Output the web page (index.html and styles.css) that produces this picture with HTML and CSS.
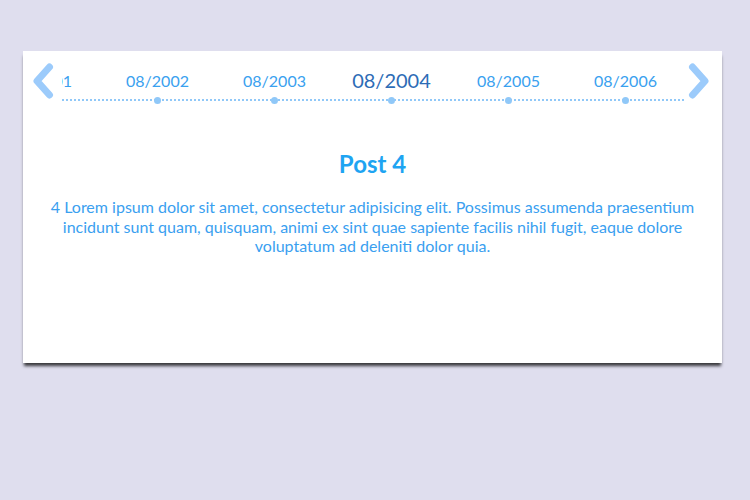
FILE: index.html
```html
<!DOCTYPE html>
<html>
<head>
<meta charset="utf-8">
<link rel="stylesheet" href="styles.css">
</head>
<body>
<div class="page">
  <div class="card">
    <div class="nav">
      <div class="arrow arrow-left">
        <svg width="24" height="36" viewBox="0 0 24 36"><path d="M17.5 4 L5 18 L17.5 32" fill="none" stroke="#9ccbfb" stroke-width="7" stroke-linecap="round" stroke-linejoin="round"/></svg>
      </div>
      <div class="track">
        <div class="events">
          <div class="event"><span class="label">08/2001</span><span class="dot"></span></div>
          <div class="event"><span class="label">08/2002</span><span class="dot"></span></div>
          <div class="event"><span class="label">08/2003</span><span class="dot"></span></div>
          <div class="event active"><span class="label">08/2004</span><span class="dot"></span></div>
          <div class="event"><span class="label">08/2005</span><span class="dot"></span></div>
          <div class="event"><span class="label">08/2006</span><span class="dot"></span></div>
        </div>
      </div>
      <div class="arrow arrow-right">
        <svg width="24" height="36" viewBox="0 0 24 36"><path d="M6.5 4 L19 18 L6.5 32" fill="none" stroke="#9ccbfb" stroke-width="7" stroke-linecap="round" stroke-linejoin="round"/></svg>
      </div>
    </div>
    <div class="post">
      <h2 class="title">Post 4</h2>
      <p class="text">4 Lorem ipsum dolor sit amet, consectetur adipisicing elit. Possimus assumenda praesentium incidunt sunt quam, quisquam, animi ex sint quae sapiente facilis nihil fugit, eaque dolore voluptatum ad deleniti dolor quia.</p>
    </div>
  </div>
</div>
</body>
</html>
```

FILE: styles.css
```css
html, body {
  margin: 0;
  padding: 0;
  background: #dfdeee;
  font-family: Lato, "Open Sans", sans-serif;
}
.page {
  padding: 51px 28px 20px 23px;
}
.card {
  width: 699px;
  height: 312px;
  background: #ffffff;
  box-shadow: 0 4px 3px -1px rgba(0, 0, 0, 0.75);
}
.nav {
  display: flex;
  height: 54px;
}
.arrow {
  flex: 0 0 auto;
  display: flex;
  align-items: center;
  height: 62px;
  margin-top: -1px;
}
.arrow-left {
  width: 39px;
  justify-content: flex-start;
}
.arrow-left svg {
  margin-left: 9px;
}
.arrow-right {
  width: 38px;
  justify-content: flex-end;
}
.arrow-right svg {
  margin-right: 12px;
}
.track {
  flex: 1 1 auto;
  height: 54px;
  overflow: hidden;
}
.events {
  display: flex;
  margin-left: -80px;
  height: 48px;
  border-bottom: 2px dotted #90c8f8;
}
.event {
  flex: 0 0 117px;
  width: 117px;
  height: 48px;
  position: relative;
  display: flex;
  flex-direction: column;
  justify-content: flex-end;
  align-items: center;
  padding-bottom: 10px;
  box-sizing: border-box;
}
.label {
  font-size: 16px;
  line-height: 16px;
  color: #3aa1ef;
  white-space: nowrap;
}
.event.active {
  padding-bottom: 9px;
}
.event.active .label {
  font-size: 20px;
  line-height: 20px;
  color: #2d6cb6;
}
.dot {
  position: absolute;
  left: 50%;
  bottom: -5px;
  width: 7px;
  height: 7px;
  margin-left: -3.5px;
  border-radius: 50%;
  background: #90c8f8;
}
.post {
  padding: 0 25px;
  text-align: center;
}
.title {
  margin: 44px 0 0;
  font-size: 24px;
  line-height: 30px;
  font-weight: 700;
  color: #1ea4f2;
}
.text {
  margin: 18px 0 0;
  font-size: 16px;
  line-height: 19.5px;
  color: #3aa0f0;
}
```
